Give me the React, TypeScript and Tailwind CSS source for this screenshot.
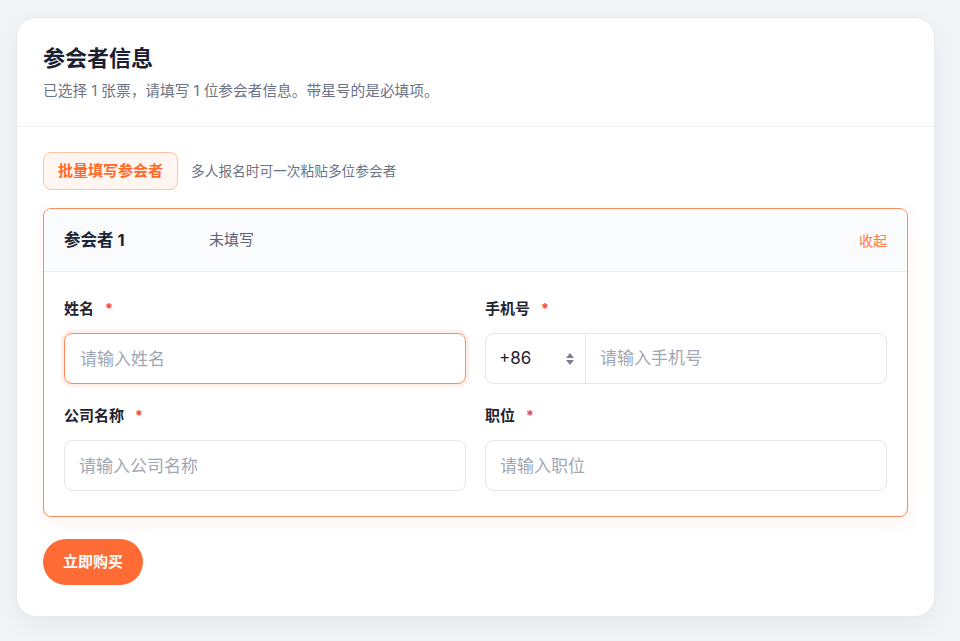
import React from "react";

const font = { fontFamily: 'Inter, "Noto Sans CJK SC", "Noto Sans", sans-serif' };

function Label({ text }: { text: string }) {
  return (
    <div className="flex items-center h-5 text-[15px] font-semibold text-[#1f2433] leading-5">
      <span>{text}</span>
      <span className="ml-[11px] text-[#ef4444] text-[14px] font-bold">*</span>
    </div>
  );
}

export default function App() {
  return (
    <div className="min-h-screen bg-[#f3f4f7] pl-4 pt-[17px] pb-6" style={font}>
      <div className="w-[919px] bg-white rounded-[20px] border border-[#e6e9ef] shadow-[0_8px_24px_rgba(30,40,70,0.06)]">
        <div className="px-[26px] pt-[26px] pb-[25px] border-b border-[#edf0f4]">
          <h1 className="text-[22px] leading-7 font-bold text-[#1b2133]">参会者信息</h1>
          <p className="mt-[9px] text-[14.7px] leading-5 text-[#6b7385]">
            已选择 1 张票，请填写 1 位参会者信息。带星号的是必填项。
          </p>
        </div>
        <div className="px-[26px] pt-[25px] pb-[31px]">
          <div className="flex items-center gap-[13px]">
            <button className="h-[38px] px-[14px] rounded-[8px] border border-[#ffc1a3] bg-[#fff6f1] text-[15px] font-semibold text-[#ff6a2c]">
              批量填写参会者
            </button>
            <span className="text-[13.7px] text-[#6b7385]">多人报名时可一次粘贴多位参会者</span>
          </div>

          <div className="mt-[18px] rounded-[8px] border border-[#ff8a5c] overflow-hidden shadow-[0_6px_18px_rgba(255,120,70,0.08)]">
            <div className="h-[63px] bg-[#fafbfd] border-b border-[#edf0f4] flex items-center px-5">
              <span className="w-[145px] text-[16.5px] font-bold text-[#1f2433]">参会者 1</span>
              <span className="text-[15px] text-[#5b6375]">未填写</span>
              <span className="ml-auto text-[14px] text-[#ff7a45]">收起</span>
            </div>
            <div className="px-5 pt-[27px] pb-[25px] grid grid-cols-2 gap-x-[19px]">
              <div>
                <Label text="姓名" />
                <input
                  className="mt-[14px] w-full h-[51px] rounded-[8px] border border-[#ff8a5c] px-[15px] text-[17px] outline-none shadow-[0_0_0_3px_rgba(255,120,70,0.12)] placeholder:text-[#a0a7b4]"
                  placeholder="请输入姓名"
                  style={font}
                />
              </div>
              <div>
                <Label text="手机号" />
                <div className="mt-[14px] flex h-[51px] rounded-[8px] border border-[#e3e7ee] overflow-hidden">
                  <div className="w-[100px] flex items-center justify-between pl-[13px] pr-[10px] border-r border-[#e3e7ee]">
                    <span className="text-[17px] text-[#1f2433]">+86</span>
                    <svg width="10" height="16" viewBox="0 0 10 16">
                      <path d="M5 2 L9 7 H1 Z" fill="#7a8191" />
                      <path d="M5 14 L9 9 H1 Z" fill="#7a8191" />
                    </svg>
                  </div>
                  <input
                    className="flex-1 px-[14px] text-[17px] outline-none placeholder:text-[#a0a7b4]"
                    placeholder="请输入手机号"
                    style={font}
                  />
                </div>
              </div>
              <div className="mt-[22px]">
                <Label text="公司名称" />
                <input
                  className="mt-[14px] w-full h-[51px] rounded-[8px] border border-[#e3e7ee] px-[14px] text-[17px] outline-none placeholder:text-[#a0a7b4]"
                  placeholder="请输入公司名称"
                  style={font}
                />
              </div>
              <div className="mt-[22px]">
                <Label text="职位" />
                <input
                  className="mt-[14px] w-full h-[51px] rounded-[8px] border border-[#e3e7ee] px-[14px] text-[17px] outline-none placeholder:text-[#a0a7b4]"
                  placeholder="请输入职位"
                  style={font}
                />
              </div>
            </div>
          </div>

          <button className="mt-[22px] h-[46px] w-[100px] rounded-full bg-[#ff6b35] text-white text-[15px] font-semibold">
            立即购买
          </button>
        </div>
      </div>
    </div>
  );
}
